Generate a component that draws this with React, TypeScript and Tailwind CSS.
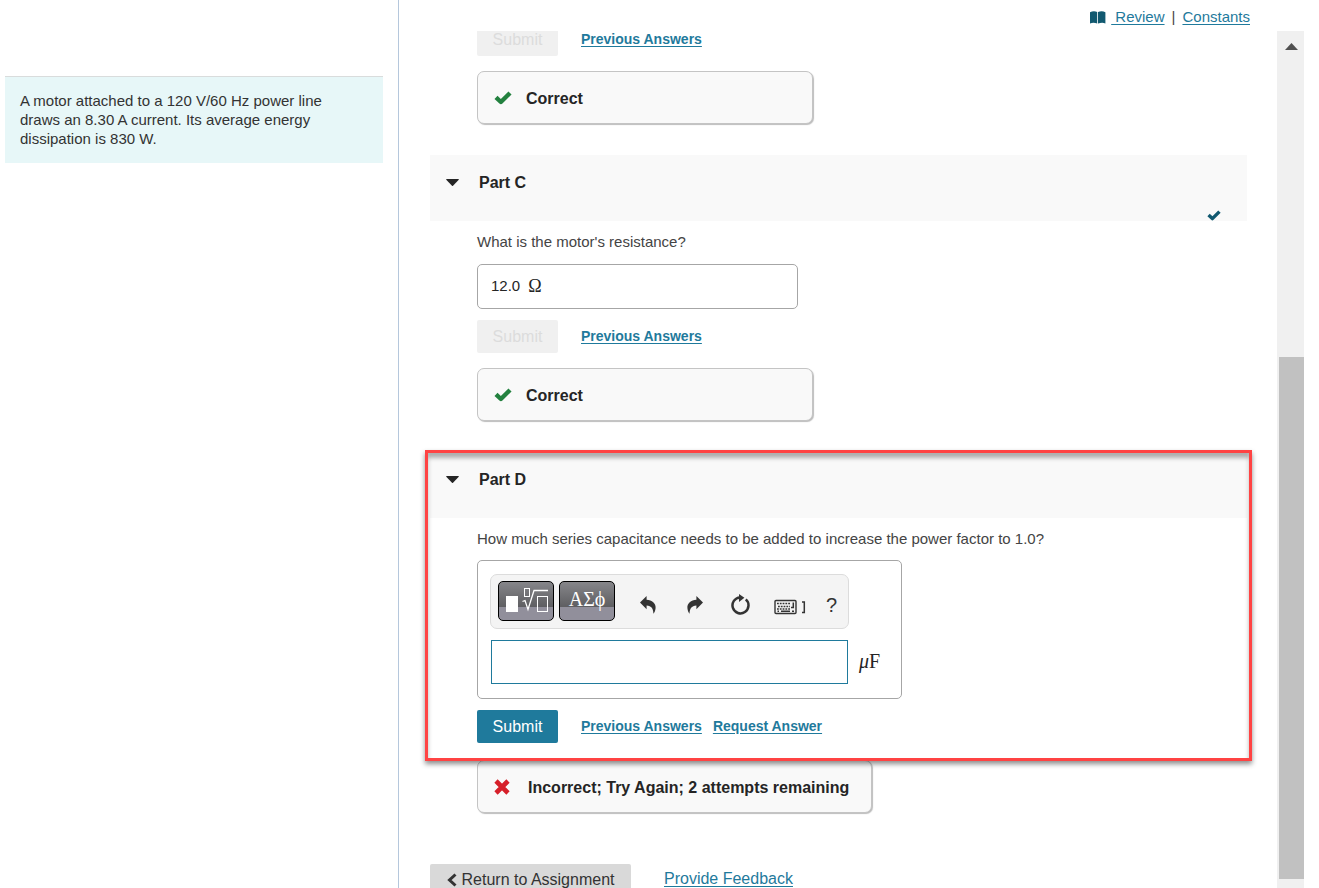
import { useState } from "react";
import type { ReactNode } from "react";

const linkClass = "text-[#1f7a9c] underline underline-offset-2";

function CheckIcon({ className }: { className: string }) {
  return (
    <svg viewBox="0 0 18 14" className={className} fill="none" stroke="currentColor" strokeWidth="4.4" strokeLinejoin="round" aria-hidden="true">
      <path d="M2 6.4 L6.9 11 L16 2" />
    </svg>
  );
}

function CrossIcon() {
  return (
    <svg viewBox="0 0 16 16" className="mr-1 h-4 w-4 text-[#d6202a]" fill="none" stroke="currentColor" strokeWidth="4.6" aria-hidden="true">
      <path d="M2 2 L14 14 M14 2 L2 14" />
    </svg>
  );
}

function BookIcon() {
  return (
    <svg viewBox="0 0 16 13" className="h-[13px] w-4 text-[#115970]" fill="currentColor" aria-hidden="true">
      <path d="M0 1.2 Q3.8 -.4 7.2 1 V12.6 Q3.8 11.2 0 12.4 Z" />
      <path d="M8 1 Q12 -.4 15.4 1.2 V12.4 Q12 11.2 8 12.6 Z" />
    </svg>
  );
}

function TemplatesIcon() {
  return (
    <svg viewBox="0 0 44 26" className="h-[26px] w-11" fill="none" stroke="white" aria-hidden="true">
      <rect x="2" y="8" width="12" height="16" fill="white" stroke="none" />
      <rect x="20.5" y="0.5" width="5" height="8" />
      <path d="M18.5 13.5 L21 12.5 L24 21.5 L30 2.5 H44" strokeWidth="1.3" />
      <rect x="33.5" y="8.5" width="10" height="15" />
    </svg>
  );
}

function UndoIcon({ flip }: { flip?: boolean }) {
  return (
    <svg viewBox="0 0 16 18" className={flip ? "h-[18px] w-4 -scale-x-100" : "h-[18px] w-4"} fill="#333" aria-hidden="true">
      <path d="M0 6.6 L6.6 0 V3.8 C12 4 16 7.5 15.6 12 C15.4 14.6 14.5 16.6 13.4 17.8 C13.4 12.5 11.5 9.8 6.6 9.4 V13.2 Z" />
    </svg>
  );
}

function ResetIcon() {
  return (
    <svg viewBox="0 0 20 22" className="h-[22px] w-5" fill="none" stroke="#333" aria-hidden="true">
      <path d="M15.8 5.4 A8 8 0 1 1 10 3.4" strokeWidth="2.5" />
      <path d="M9 0 L14.4 3.8 L9 8 Z" fill="#333" stroke="none" />
    </svg>
  );
}

function KeyboardIcon() {
  return (
    <svg viewBox="0 0 32 16" className="h-4 w-8" fill="none" stroke="#333" aria-hidden="true">
      <rect x="1" y="1.5" width="21" height="13" rx="1" strokeWidth="1.4" />
      <path d="M3 4.5 H16 M4 7.5 H16 M3 10 H16" strokeWidth="1.6" strokeDasharray="1.8 1" />
      <path d="M19.3 3.5 V8.5 H17" strokeWidth="1.5" />
      <path d="M3.5 12.3 H5 M7 12.3 H16 M18 12.3 H20" strokeWidth="1.4" />
      <path d="M28 3 H30.3 V13.5 H28" strokeWidth="1.5" />
    </svg>
  );
}

function Feedback({ icon, wide, children }: { icon: ReactNode; wide?: boolean; children: ReactNode }) {
  return (
    <div
      className={`flex h-[53px] w-fit items-center gap-[14px] rounded-[7px] border border-[#c4c4c4] bg-[#f9f9f9] px-4 text-base font-bold text-[#252525] shadow-[1px_1px_1px_#bdbdbd] ${wide ? "min-w-[395px]" : "min-w-[336px]"}`}
    >
      {icon}
      <span className="pt-[2px]">{children}</span>
    </div>
  );
}

function Actions({ disabled, canRequest }: { disabled?: boolean; canRequest?: boolean }) {
  return (
    <div className="flex h-[33px] items-center">
      <button
        type="submit"
        disabled={disabled}
        className="mr-[23px] h-[33px] w-[81px] rounded-[2px] bg-[#1f7a9c] text-base text-white disabled:bg-[#f0f0f0] disabled:text-[#dcdcdc]"
      >
        Submit
      </button>
      <div className="flex gap-[11px] pb-[2px] text-sm font-bold">
        <a href="#previous" className={linkClass}>Previous Answers</a>
        {canRequest && <a href="#request" className={linkClass}>Request Answer</a>}
      </div>
    </div>
  );
}

function PartHeader({ title, done }: { title: string; done?: boolean }) {
  return (
    <div className="flex h-[66px] items-start justify-between bg-[#f9f9f9] pl-4">
      <button type="button" className="flex h-14 items-center gap-5 text-base font-bold text-[#252525]">
        <svg viewBox="0 0 13 8" className="h-2 w-[13px]" fill="currentColor" aria-hidden="true">
          <path d="M0 .6 Q0 0 1 0 H12 Q13 0 13 .6 L7 6.8 Q6.5 7.2 6 6.8 Z" />
        </svg>
        {title}
      </button>
      {done && (
        <div className="self-end pr-[26px]">
          <CheckIcon className="h-[11px] w-[14px] text-[#115970]" />
        </div>
      )}
    </div>
  );
}

export default function App() {
  const [answer, setAnswer] = useState("");
  const greek = "font-['Liberation_Serif',serif]";

  return (
    <div className="flex h-screen overflow-hidden bg-white font-['Liberation_Sans',Arial,sans-serif] text-[#444]">
      <aside className="w-[399px] shrink-0 border-r border-[#b5c7dc] pt-[76px] pr-[15px] pl-[5px]">
        <p className="border-t border-[#d9dcdc] bg-[#e7f7f8] pt-[14px] pr-10 pb-[15px] pl-[15px] text-[15px] leading-[19px] text-[#333]">
          A motor attached to a 120 V/60 Hz power line draws an 8.30 A current. Its average energy dissipation is 830 W.
        </p>
      </aside>

      <main className="flex min-w-0 flex-1 flex-col">
        <nav className="flex h-[31px] shrink-0 items-center justify-end gap-[7px] pt-1 pr-[69px] text-[15px]">
          <div className="flex items-center gap-[5px]">
            <BookIcon />
            <a href="#review" className={linkClass}>&nbsp;Review</a>
          </div>
          <span>|</span>
          <a href="#constants" className={linkClass}>Constants</a>
        </nav>

        <div className="flex min-h-0 flex-1 pr-[15px]">
          <div className="min-w-0 flex-1 overflow-hidden pr-[30px] pl-[31px]">
            <section className="-mt-2 flex flex-col gap-[15px] pb-[31px] pl-[47px]">
              <Actions disabled />
              <Feedback icon={<CheckIcon className="h-[14px] w-[18px] text-[#23813f]" />}>Correct</Feedback>
            </section>

            <section className="pb-[31px]">
              <PartHeader title="Part C" done />
              <div className="pl-[47px]">
                <p className="pt-3 pb-[13px] text-[15px] leading-[18px]">What is the motor's resistance?</p>
                <div className="mb-[11px] flex h-[45px] w-[321px] items-center gap-2 rounded-[5px] border border-[#a6a6a6] px-[13px] pb-px text-[15px] text-[#252525]">
                  <span>12.0</span>
                  <span className={`text-lg leading-5 ${greek}`}>Ω</span>
                </div>
                <Actions disabled />
                <div className="pt-[15px]">
                  <Feedback icon={<CheckIcon className="h-[14px] w-[18px] text-[#23813f]" />}>Correct</Feedback>
                </div>
              </div>
            </section>

            <section>
              <div className="relative">
                <PartHeader title="Part D" />
                <form className="pb-[17px] pl-[47px]" onSubmit={(e) => e.preventDefault()}>
                  <label htmlFor="capacitance" className="block pt-3 pb-3 text-[15px] leading-[18px]">
                    How much series capacitance needs to be added to increase the power factor to 1.0?
                  </label>
                  <div className="mb-[11px] w-[425px] rounded-[5px] border border-[#a6a6a6] px-3 pt-[13px] pb-[14px]">
                    <div className="flex h-[55px] w-[359px] items-center rounded-[7px] border border-[#dcdcdc] bg-[#f4f4f4] pb-px pl-[7px] text-[#333]">
                      <button
                        type="button"
                        aria-label="Templates"
                        className="mr-[5px] flex h-10 w-14 items-center justify-center rounded-[5px] border border-black bg-[linear-gradient(#86868a_0%,#5e5e61_66%,#918f9b_67%,#918f9b_100%)]"
                      >
                        <TemplatesIcon />
                      </button>
                      <button
                        type="button"
                        aria-label="Symbols"
                        className={`mr-[25px] h-10 w-14 rounded-[5px] border border-black bg-[linear-gradient(#86868a_0%,#5e5e61_66%,#918f9b_67%,#918f9b_100%)] pb-1 text-xl text-white ${greek}`}
                      >
                        ΑΣϕ
                      </button>
                      <div className="flex items-center pt-2">
                        <button type="button" aria-label="Undo" className="mr-[31px]"><UndoIcon /></button>
                        <button type="button" aria-label="Redo" className="mr-[27px]"><UndoIcon flip /></button>
                        <button type="button" aria-label="Reset" className="mr-6"><ResetIcon /></button>
                        <button type="button" aria-label="Keyboard shortcuts" className="mr-5 pt-1"><KeyboardIcon /></button>
                        <button type="button" aria-label="Help" className="text-xl">?</button>
                      </div>
                    </div>
                    <div className="mt-[11px] flex items-center gap-[11px] pl-px">
                      <input
                        id="capacitance"
                        type="text"
                        value={answer}
                        onChange={(e) => setAnswer(e.target.value)}
                        className="h-11 w-[357px] border border-[#1f7a9c] px-3 text-base outline-none"
                      />
                      <span className={`pb-[2px] text-xl text-[#252525] ${greek}`}><i>μ</i>F</span>
                    </div>
                  </div>
                  <Actions canRequest />
                </form>
                {/* Highlight frame around the open part */}
                <div className="pointer-events-none absolute -inset-x-[5px] -top-[2px] -bottom-px border-[3px] border-[#ff4343] shadow-[0_3px_5px_rgba(0,0,0,0.45),inset_0_5px_4px_rgba(0,0,0,0.3)]" />
              </div>
              <div className="pl-[47px]">
                <Feedback wide icon={<CrossIcon />}>Incorrect; Try Again; 2 attempts remaining</Feedback>
              </div>
            </section>

            <footer className="flex items-start gap-[33px] pt-[51px]">
              <button type="button" className="flex h-8 w-[201px] items-center justify-center gap-[5px] rounded-[2px] bg-[#d9d9d9] text-base text-[#333]">
                <svg viewBox="0 0 10 14" className="h-[14px] w-[10px]" fill="none" stroke="currentColor" strokeWidth="3" aria-hidden="true">
                  <path d="M8.5 1.5 L2.5 7 L8.5 12.5" />
                </svg>
                Return to Assignment
              </button>
              <a href="#feedback" className={`pt-[3px] ${linkClass}`}>Provide Feedback</a>
            </footer>
          </div>

          <div className="flex w-[27px] shrink-0 flex-col bg-[#f0f0f0] pb-[9px] pl-[2px]" aria-hidden="true">
            <div className="flex h-[31px] items-center justify-center">
              <svg viewBox="0 0 13 7" className="h-[7px] w-[13px]" fill="#505050">
                <path d="M6.5 0 L13 7 H0 Z" />
              </svg>
            </div>
            <div className="grow-[295]" />
            <div className="grow-[522] bg-[#c1c1c1]" />
          </div>
        </div>
      </main>
    </div>
  );
}
